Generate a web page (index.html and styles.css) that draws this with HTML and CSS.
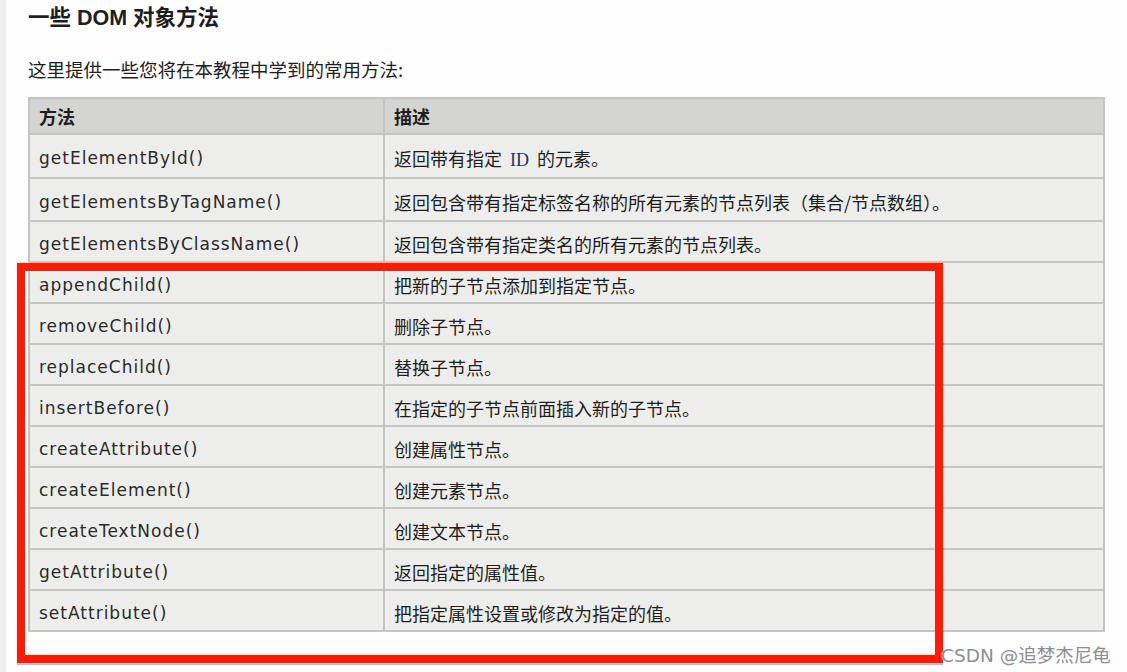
FILE: index.html
```html
<!DOCTYPE html>
<html lang="zh">
<head>
<meta charset="utf-8">
<title>一些 DOM 对象方法</title>
<link rel="stylesheet" href="styles.css">
</head>
<body>
<div class="page">
  <h2 class="title">一些 DOM 对象方法</h2>
  <p class="intro">这里提供一些您将在本教程中学到的常用方法:</p>
  <table class="methods">
    <thead>
      <tr><th class="c1">方法</th><th>描述</th></tr>
    </thead>
    <tbody>
      <tr class="tall"><td>getElementById()</td><td class="zh">返回带有指定 <span class="id">ID</span> 的元素。</td></tr>
      <tr class="tall"><td>getElementsByTagName()</td><td class="zh">返回包含带有指定标签名称的所有元素的节点列表（集合/节点数组）。</td></tr>
      <tr><td>getElementsByClassName()</td><td class="zh">返回包含带有指定类名的所有元素的节点列表。</td></tr>
      <tr><td>appendChild()</td><td class="zh">把新的子节点添加到指定节点。</td></tr>
      <tr><td>removeChild()</td><td class="zh">删除子节点。</td></tr>
      <tr><td>replaceChild()</td><td class="zh">替换子节点。</td></tr>
      <tr><td>insertBefore()</td><td class="zh">在指定的子节点前面插入新的子节点。</td></tr>
      <tr><td>createAttribute()</td><td class="zh">创建属性节点。</td></tr>
      <tr><td>createElement()</td><td class="zh">创建元素节点。</td></tr>
      <tr><td>createTextNode()</td><td class="zh">创建文本节点。</td></tr>
      <tr><td>getAttribute()</td><td class="zh">返回指定的属性值。</td></tr>
      <tr><td>setAttribute()</td><td class="zh">把指定属性设置或修改为指定的值。</td></tr>
    </tbody>
  </table>
  <div class="highlight"></div>
  <div class="watermark">CSDN @追梦杰尼龟</div>
</div>
</body>
</html>
```

FILE: styles.css
```css
html, body {
  margin: 0;
  padding: 0;
  background: #fdfefd;
}
body {
  font-family: "DejaVu Sans", "Noto Sans CJK SC", sans-serif;
  color: #1e1e1e;
}
.page {
  position: relative;
  box-sizing: border-box;
  min-height: 672px;
  border-left: 6px solid #efefef;
  padding: 6px 22px 0 22px;
}
.title {
  margin: 0;
  font-size: 21.5px;
  line-height: 24px;
  font-weight: bold;
  font-family: "Liberation Sans", "Noto Sans CJK SC", sans-serif;
}
.intro {
  margin: 27px 0 16px 0;
  font-size: 18.5px;
  line-height: 24px;
  font-family: "Noto Sans CJK SC", sans-serif;
}
.methods {
  width: 1077px;
  border-collapse: collapse;
  border: 2px solid #c4c5c3;
}
.methods th, .methods td {
  border: 2px solid #c4c5c3;
  text-align: left;
  padding: 0 0 0 9px;
  vertical-align: middle;
}
.methods th {
  height: 34px;
  background: #d4d5d2;
  font-size: 18px;
  font-weight: bold;
  font-family: "Noto Sans CJK SC", sans-serif;
}
.methods th.c1 {
  width: 344px;
}
.methods td {
  height: 34px;
  padding-top: 5px;
  background: #edeeeb;
  font-size: 17px;
  letter-spacing: 1px;
  color: #2a2a2a;
}
.methods tr.tall td {
  height: 36.5px;
}
.methods td.zh {
  font-family: "Noto Sans CJK SC", sans-serif;
  font-size: 18px;
  letter-spacing: 0;
  color: #1e1e1e;
}
.id {
  font-family: "Liberation Serif", serif;
  color: #223366;
  padding: 0 4px;
}
.highlight {
  position: absolute;
  left: 11px;
  top: 263px;
  width: 926px;
  height: 400px;
  box-sizing: border-box;
  border: 8px solid #ff1a00;
  box-shadow: 0 2px 1px rgba(0,0,0,0.25);
}
.watermark {
  position: absolute;
  left: 935px;
  top: 641px;
  font-family: "DejaVu Sans", "Noto Sans CJK SC", sans-serif;
  font-size: 18.5px;
  color: #8f8f8f;
  text-shadow: 0 0 2px #ffffff;
  white-space: nowrap;
}
```
